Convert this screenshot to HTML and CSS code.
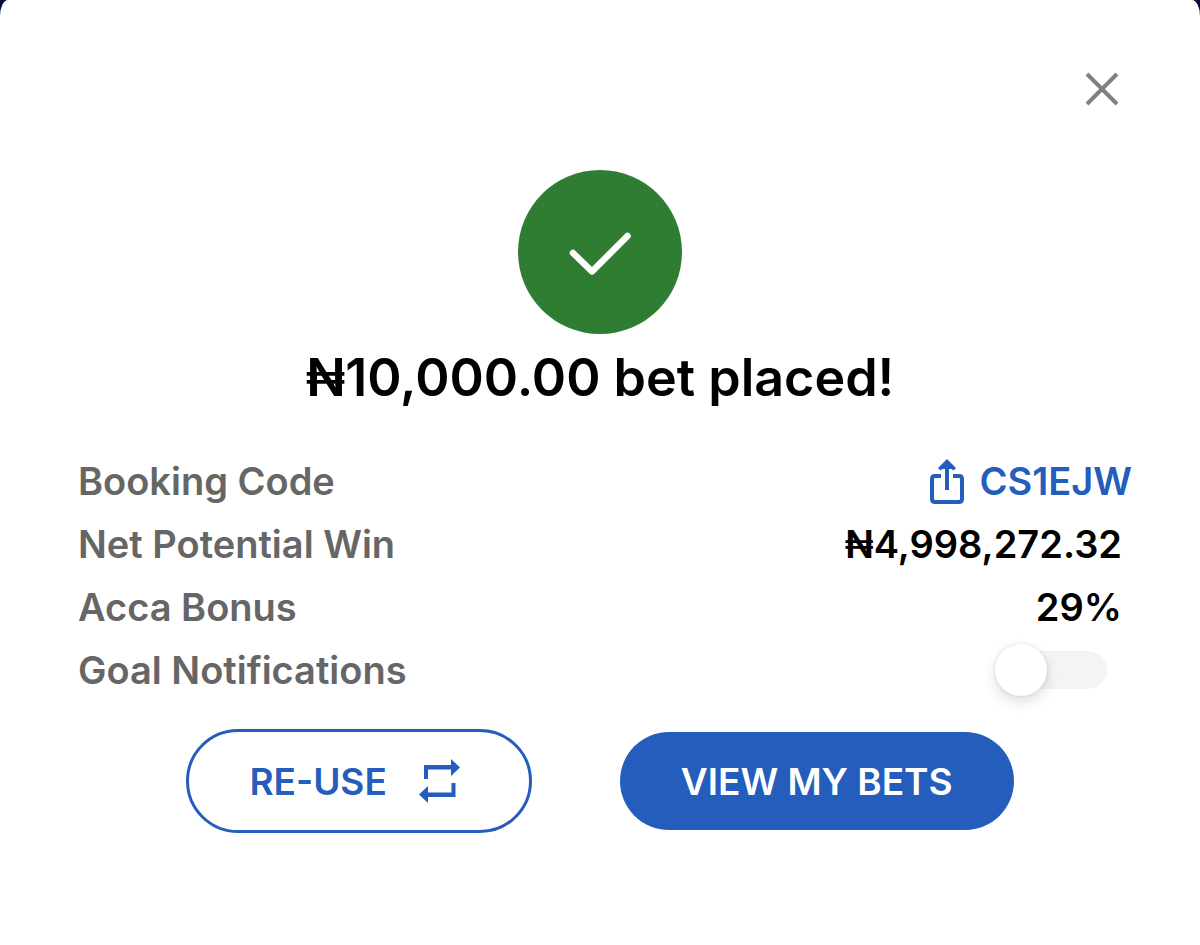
FILE: index.html
```html
<!DOCTYPE html>
<html lang="en">
<head>
    <meta charset="UTF-8">
    <meta name="viewport" content="width=device-width, initial-scale=1.0">
    <title>Bet placed</title>
    <link rel="stylesheet" href="styles.css">
</head>
<body>

    <main class="sheet">
        <!-- Close -->
        <div class="sheet-top">
            <button class="close-button" type="button" aria-label="Close">
                <svg width="34" height="34" viewBox="0 0 34 34" fill="none" stroke="#808080" stroke-width="4">
                    <path d="M2 2 32 32M32 2 2 32"/>
                </svg>
            </button>
        </div>

        <!-- Confirmation -->
        <div class="success">
            <svg width="164" height="164" viewBox="0 0 164 164" fill="none">
                <circle cx="82" cy="82" r="82" fill="#2e7d32"/>
                <path d="M55 83 74 101.500 109.500 66" stroke="#fff" stroke-width="6.500" stroke-linecap="round" stroke-linejoin="round"/>
            </svg>
            <h1>₦10,000.00 bet placed!</h1>
        </div>

        <!-- Bet details -->
        <div class="details">
            <div class="row">
                <span class="label">Booking Code</span>
                <a class="code" href="#">
                    <svg width="34" height="46" viewBox="0 0 34 46" fill="none" stroke="#245dbc" stroke-width="4">
                        <path d="M11 18H5Q2 18 2 21V41Q2 44 5 44H29Q32 44 32 41V21Q32 18 29 18H23"/>
                        <path d="M17 32V7"/>
                        <path d="M17 1 26 10 23.500 12.500 17 6.500 10.500 12.500 8 10Z" fill="#245dbc" stroke="none"/>
                        <path d="M17 3 24 11H10Z" fill="#245dbc" stroke="none"/>
                    </svg>
                    CS1EJW
                </a>
            </div>
            <div class="row">
                <span class="label">Net Potential Win</span>
                <span class="value">₦4,998,272.32</span>
            </div>
            <div class="row">
                <span class="label">Acca Bonus</span>
                <span class="value">29%</span>
            </div>
            <div class="row">
                <label class="label" for="goalNotifications">Goal Notifications</label>
                <input class="switch" type="checkbox" role="switch" id="goalNotifications">
            </div>
        </div>

        <!-- Actions -->
        <div class="actions">
            <button class="button reuse-button" type="button">
                RE-USE
                <svg width="42" height="44" viewBox="0 0 42 44" fill="#245dbc">
                    <path d="M5 6H32V0L41 8.500 32 17V10.500H9V20H5Z"/>
                    <path d="M36.500 38H9V44L0 35.500 9 27V33.500H32.500V24H36.500Z"/>
                </svg>
            </button>
            <button class="button bets-button" type="button">VIEW MY BETS</button>
        </div>
    </main>

</body>
</html>
```
FILE: styles.css
```css
* {
    box-sizing: border-box;
}
body {
    margin: 0;
    background-color: #030b3c;
    font-family: Inter, "Liberation Sans", sans-serif;
    font-size: 38px;
    font-weight: 600;
    color: #000;
}
.sheet {
    min-height: 100vh;
    padding: 64px 68px 64px 78px;
    background-color: #fff;
    border-radius: 8px 8px 0 0 / 16px 16px 0 0;
}
.sheet-top {
    display: flex;
    justify-content: flex-end;
    padding-right: 5px;
}
.close-button {
    display: flex;
    align-items: center;
    justify-content: center;
    width: 50px;
    height: 50px;
    padding: 0;
    border: none;
    background: none;
    cursor: pointer;
}
.success {
    display: flex;
    flex-direction: column;
    align-items: center;
    gap: 12px;
    padding: 56px 10px 0 0;
}
h1 {
    margin: 0;
    font-size: 52px;
    line-height: 64px;
    font-weight: 600;
    text-align: center;
}
.details {
    margin-top: 39px;
}
.row {
    display: flex;
    align-items: center;
    justify-content: space-between;
    height: 63px;
}
.label {
    color: #666;
}
.value {
    padding-right: 10px;
}
.code {
    display: flex;
    align-items: center;
    gap: 15px;
    color: #245dbc;
    text-decoration: none;
}
.switch {
    appearance: none;
    display: flex;
    align-items: center;
    width: 112px;
    height: 38px;
    margin: 0 25px 0 0;
    border-radius: 19px;
    background-color: #f4f4f4;
    cursor: pointer;
}
.switch::before {
    content: "";
    width: 52px;
    height: 52px;
    border-radius: 50%;
    background-color: #fff;
    box-shadow: 0 0 4px rgba(0, 0, 0, 0.1), 0 6px 14px rgba(20, 30, 80, 0.14);
}
.switch:checked {
    justify-content: flex-end;
    background-color: #245dbc;
}
.actions {
    display: flex;
    align-items: center;
    justify-content: center;
    gap: 88px;
    margin-top: 28px;
    padding-right: 10px;
}
.button {
    display: flex;
    align-items: center;
    justify-content: center;
    gap: 32px;
    height: 98px;
    padding: 0 61px;
    border: none;
    border-radius: 52px;
    font: inherit;
    font-size: 37px;
    cursor: pointer;
}
.reuse-button {
    height: 104px;
    padding: 0 68px 0 60px;
    border: 3px solid #245dbc;
    background-color: #fff;
    color: #245dbc;
}
.bets-button {
    background-color: #245dbc;
    color: #fff;
}
```
